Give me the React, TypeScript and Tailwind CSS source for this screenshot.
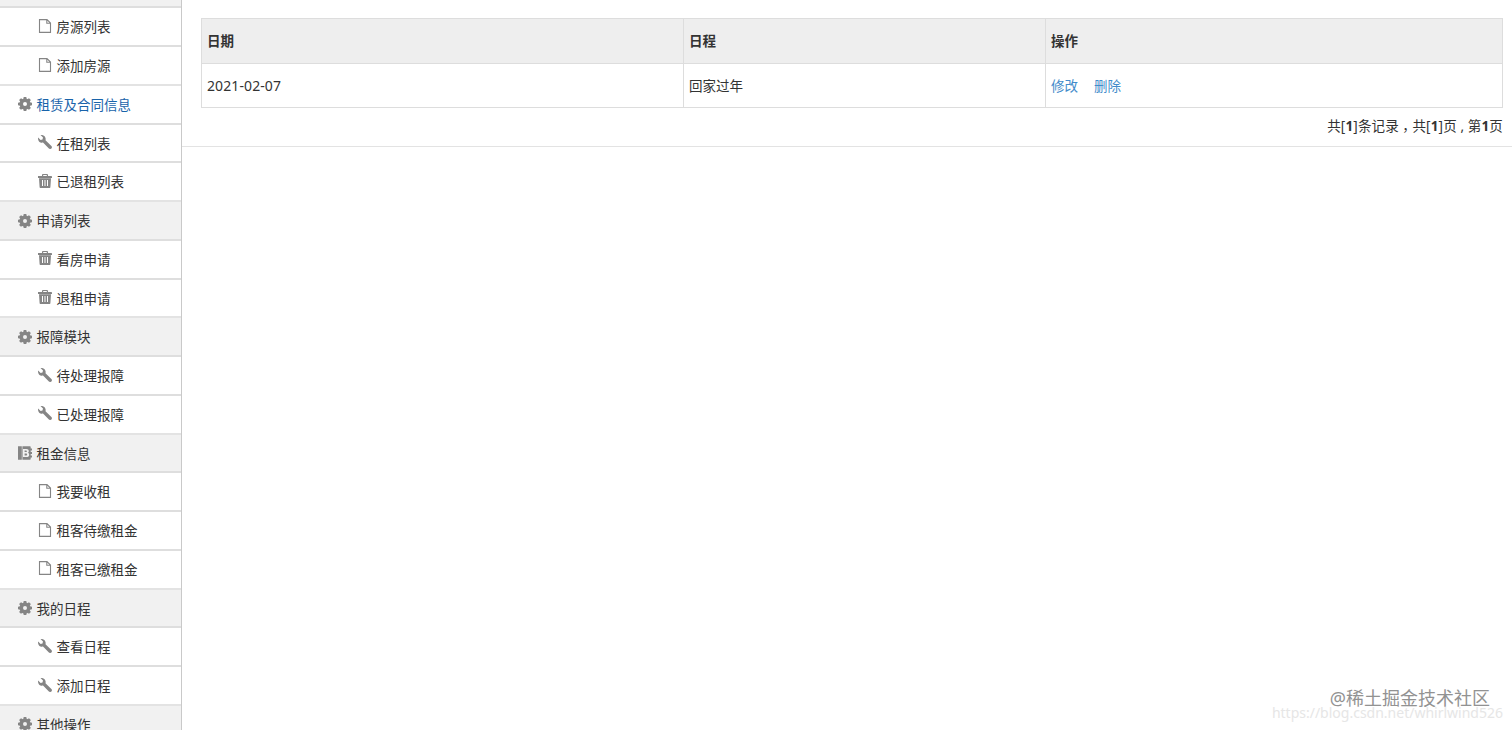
import { clsx } from "clsx";

type IconName = "file" | "cog" | "wrench" | "trash" | "book";

type NavItem = {
  label: string;
  icon: IconName;
  group?: boolean;
  active?: boolean;
};

const navItems: NavItem[] = [
  { label: "房源列表", icon: "file" },
  { label: "添加房源", icon: "file" },
  { label: "租赁及合同信息", icon: "cog", group: true, active: true },
  { label: "在租列表", icon: "wrench" },
  { label: "已退租列表", icon: "trash" },
  { label: "申请列表", icon: "cog", group: true },
  { label: "看房申请", icon: "trash" },
  { label: "退租申请", icon: "trash" },
  { label: "报障模块", icon: "cog", group: true },
  { label: "待处理报障", icon: "wrench" },
  { label: "已处理报障", icon: "wrench" },
  { label: "租金信息", icon: "book", group: true },
  { label: "我要收租", icon: "file" },
  { label: "租客待缴租金", icon: "file" },
  { label: "租客已缴租金", icon: "file" },
  { label: "我的日程", icon: "cog", group: true },
  { label: "查看日程", icon: "wrench" },
  { label: "添加日程", icon: "wrench" },
  { label: "其他操作", icon: "cog", group: true },
];

const schedules = [{ date: "2021-02-07", title: "回家过年" }];

const teeth = [0, 45, 90, 135, 180, 225, 270, 315];

function Icon({ name, className }: { name: IconName; className?: string }) {
  return (
    <svg
      viewBox="0 0 14 14"
      className={clsx(
        "h-3.5 w-3.5 shrink-0 fill-[#858585] text-[#858585]",
        className,
      )}
    >
      {name === "file" && (
        <path
          d="M1.5.6H9l3.5 3.5v9.300h-11zM8.800.8v3.500h3.500"
          fill="none"
          stroke="currentColor"
          strokeWidth="1.1"
        />
      )}
      {name === "cog" && (
        <>
          <path
            fillRule="evenodd"
            d="M7 1.500a5.500 5.500 0 1 0 0 11A5.500 5.500 0 0 0 7 1.500zm0 3.500a2 2 0 1 1 0 4 2 2 0 0 1 0-4z"
          />
          {teeth.map((a) => (
            <path
              key={a}
              d="M5.700 0h2.600l.5 2.500H5.200z"
              transform={`rotate(${a} 7 7)`}
            />
          ))}
        </>
      )}
      {name === "wrench" && (
        <path d="M2.500.1 5 2.500 4.500 4.400 2.600 5 .1 2.500C-.3 4.500.7 6.800 2.500 7.400c.9.3 1.700.3 2.500.1l5.900 6c.8.7 1.800.7 2.500 0s.7-1.800 0-2.500L7.500 5.200c.3-1 .2-2.100-.3-3C6.300.5 4.300-.4 2.500.1z" />
      )}
      {name === "trash" && (
        <>
          <path d="M0 2h4V.9C4 .4 4.400 0 4.900 0h4.200c.5 0 .9.4.9.900V2h3.300c.4 0 .7.300.7.700V4H0V2.700C0 2.300 0 2 0 2zm5.200 0h3.600v-.9H5.200z" />
          <path
            fillRule="evenodd"
            d="M1 4.300h12l-.6 8.700c0 .6-.4 1-1 1H2.600c-.6 0-1-.4-1-1zM4 6v6h1V6zm2.500 0v6h1V6zM9 6v6h1V6z"
          />
        </>
      )}
      {name === "book" && (
        <path
          fillRule="evenodd"
          d="M0 .3h3.800v13.400H0zM4.400.3h7.300c.6 0 1 .4 1 1v1.200H14v2h-1.300V6H14v2h-1.300v1.500H14v2h-1.300v1.200c0 .6-.4 1-1 1H4.400zM5 3v8h3.600c1.700 0 2.600-.9 2.600-2.300 0-.9-.4-1.500-1.200-1.900.5-.3.800-.9.800-1.500C10.800 3.800 9.900 3 8.400 3zm1.600 1.400H8c1.200 0 1.200 1.700 0 1.700H6.600zm0 3.100h1.600c1.300 0 1.300 2 0 2H6.600z"
        />
      )}
    </svg>
  );
}

function Sidebar() {
  return (
    <aside className="flex w-[182px] shrink-0 flex-col border-r border-[#c9c9c9]">
      <div className="h-[6.4px] shrink-0 bg-[#f1f1f1]" />
      {navItems.map((item) => (
        <a
          key={item.label}
          className={clsx(
            "flex h-[38.76px] shrink-0 items-center gap-[4.5px] border-t-2",
            item.group ? "border-[#e3e3e3] pl-[18px]" : "border-[#dedede] pl-[38px]",
            item.group && !item.active && "bg-[#f1f1f1]",
            item.active ? "text-[#1963aa]" : "text-[#333]",
          )}
        >
          <Icon name={item.icon} className={item.group ? "" : "mb-0.5"} />
          <span className="pt-px">{item.label}</span>
        </a>
      ))}
    </aside>
  );
}

export default function App() {
  return (
    <div className="relative flex h-[730px] overflow-hidden bg-white font-['Noto_Sans','Noto_Sans_CJK_SC',sans-serif] text-[13.5px] leading-5 text-[#333]">
      <Sidebar />

      <main className="min-w-0 flex-1">
        <div className="h-[147px] border-b border-[#e3e3e3] pl-[19px] pr-[9px] pt-[18px]">
          <table className="w-[1302px] table-fixed border-collapse">
            <colgroup>
              <col className="w-[482px]" />
              <col className="w-[362px]" />
              <col />
            </colgroup>
            <thead>
              <tr className="h-[45px] bg-[#eee] text-left">
                <th className="border border-[#ddd] px-[5px] font-bold">日期</th>
                <th className="border border-[#ddd] px-[5px] font-bold">日程</th>
                <th className="border border-[#ddd] px-[5px] font-bold">操作</th>
              </tr>
            </thead>
            <tbody>
              {schedules.map((row) => (
                <tr key={row.date} className="h-[44px]">
                  <td className="border border-[#ddd] px-[5px] text-[14px] tracking-[0.1px]">
                    {row.date}
                  </td>
                  <td className="border border-[#ddd] px-[5px]">{row.title}</td>
                  <td className="border border-[#ddd] px-[5px] text-[#428bca]">
                    <a className="mr-4">修改</a>
                    <a>删除</a>
                  </td>
                </tr>
              ))}
            </tbody>
          </table>
          <p className="mt-2 whitespace-nowrap text-right tracking-[0.14px]">
            共[<b>1</b>]条记录
            <span className="inline-block translate-y-1 font-['Noto_Sans_CJK_TC',sans-serif] leading-none">
              ，
            </span>
            共[<b>1</b>]页 , 第<b>1</b>页
          </p>
        </div>
      </main>

      {/* Watermarks */}
      <div className="absolute right-[9px] top-[703px] text-[14px] leading-5 text-[#e6e6e6]">
        https://blog.csdn.net/whirlwind526
      </div>
      <div className="absolute right-[22px] top-[686px] text-[18px] leading-6 text-[#929292]">
        @稀土掘金技术社区
      </div>
    </div>
  );
}
